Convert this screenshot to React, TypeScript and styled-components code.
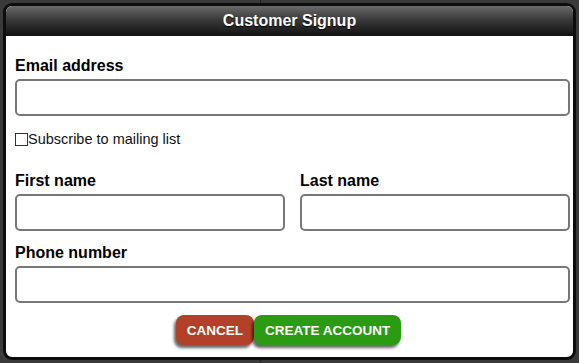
import React from "react";
import styled, { createGlobalStyle } from "styled-components";

const Global = createGlobalStyle`
  html, body { margin: 0; padding: 0; background: #3b3b3b; }
  body { font-family: "Liberation Sans", Arial, sans-serif; }
  * { box-sizing: border-box; }
`;

const Page = styled.div`
  width: 579px;
  height: 363px;
  padding: 3px;
  background: linear-gradient(to right, #3a3a3a 0, #3a3a3a 260px, #222 260px, #222 261px, #3a3a3a 261px);
`;

const Dialog = styled.div`
  width: 573px;
  height: 357px;
  border: 3px solid #0d0d0d;
  border-radius: 9px;
  background: #fff;
  overflow: hidden;
  display: flex;
  flex-direction: column;
`;

const Header = styled.div`
  height: 30px;
  flex: none;
  background: linear-gradient(to bottom, #6a6a6a 0%, #3a3a3a 45%, #111 100%);
  color: #fff;
  font-weight: bold;
  font-size: 16px;
  display: flex;
  align-items: center;
  justify-content: center;
  text-shadow: 0 1px 1px #000;
`;

const Body = styled.div`
  padding: 21px 3px 0 9px;
  display: flex;
  flex-direction: column;
`;

const Label = styled.label`
  display: block;
  font-weight: bold;
  font-size: 16px;
  color: #000;
  line-height: 18px;
  margin-bottom: 4px;
`;

const Input = styled.input`
  display: block;
  width: 100%;
  height: 37px;
  border: 2px solid #777;
  border-radius: 5px;
  background: #fff;
  outline: none;
`;

const Field = styled.div`
  display: flex;
  flex-direction: column;
`;

const CheckRow = styled.label`
  display: flex;
  align-items: center;
  font-size: 14.5px;
  color: #111;
  margin: 13px 0 0 0;
  height: 20px;
`;

const Box = styled.span`
  width: 13px;
  height: 13px;
  border: 1px solid #333;
  background: #fff;
  display: inline-block;
`;

const Row = styled.div`
  display: grid;
  grid-template-columns: 270px 270px;
  column-gap: 15px;
  margin-top: 23px;
`;

const PhoneField = styled(Field)`
  margin-top: 13px;
`;

const Actions = styled.div`
  display: flex;
  justify-content: center;
  margin-top: 12px;
  padding-right: 8px;
`;

const Btn = styled.button<{ $bg: string }>`
  height: 30px;
  border: none;
  border-radius: 8px;
  background: ${(p) => p.$bg};
  color: #fff;
  font-family: "Liberation Sans", Arial, sans-serif;
  font-weight: bold;
  font-size: 13.5px;
  padding: 0 11px;
  box-shadow: -2px 3px 3px rgba(0, 0, 0, 0.6);
  text-transform: uppercase;
`;

export default function App() {
  return (
    <>
      <Global />
      <Page>
        <Dialog>
          <Header>Customer Signup</Header>
          <Body>
            <Field>
              <Label>Email address</Label>
              <Input type="text" />
            </Field>
            <CheckRow>
              <Box />
              Subscribe to mailing list
            </CheckRow>
            <Row>
              <Field>
                <Label>First name</Label>
                <Input type="text" />
              </Field>
              <Field>
                <Label>Last name</Label>
                <Input type="text" />
              </Field>
            </Row>
            <PhoneField>
              <Label>Phone number</Label>
              <Input type="text" />
            </PhoneField>
            <Actions>
              <Btn $bg="#b3412a">Cancel</Btn>
              <Btn $bg="#2a9b12">Create Account</Btn>
            </Actions>
          </Body>
        </Dialog>
      </Page>
    </>
  );
}
